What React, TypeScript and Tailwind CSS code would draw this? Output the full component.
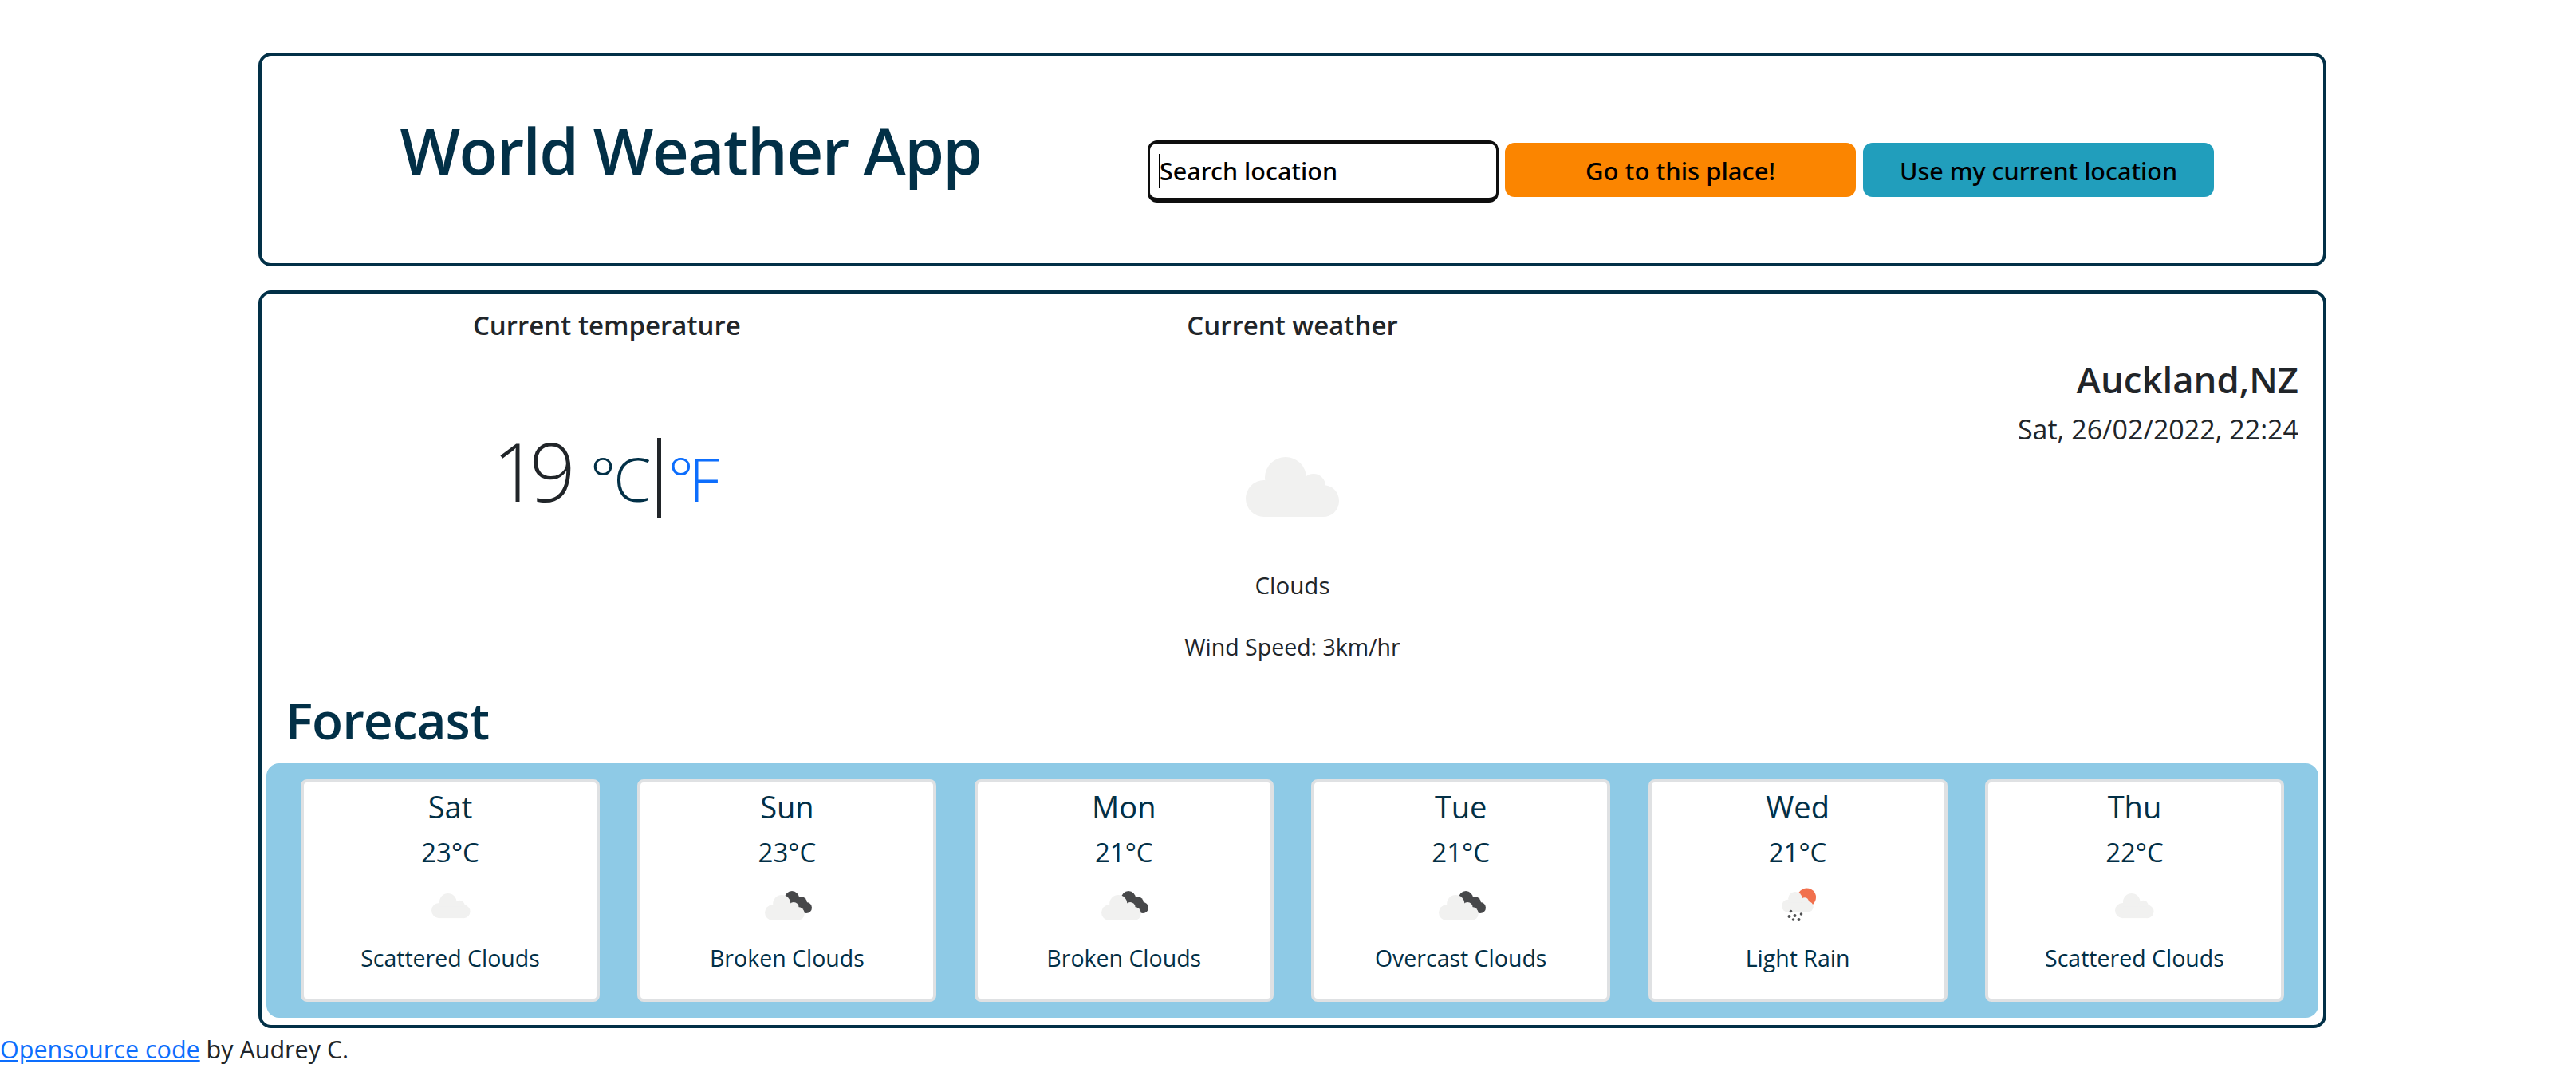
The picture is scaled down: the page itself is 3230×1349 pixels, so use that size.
const FONT = "font-['Open_Sans','Noto_Sans',sans-serif]";

type Kind = "scattered" | "broken" | "rain";

const FORECAST: { day: string; temp: string; kind: Kind; label: string }[] = [
  { day: "Sat", temp: "23°C", kind: "scattered", label: "Scattered Clouds" },
  { day: "Sun", temp: "23°C", kind: "broken", label: "Broken Clouds" },
  { day: "Mon", temp: "21°C", kind: "broken", label: "Broken Clouds" },
  { day: "Tue", temp: "21°C", kind: "broken", label: "Overcast Clouds" },
  { day: "Wed", temp: "21°C", kind: "rain", label: "Light Rain" },
  { day: "Thu", temp: "22°C", kind: "scattered", label: "Scattered Clouds" },
];

// base shape is 118x75, scaled down for the forecast cards
function CloudShape({ transform }: { transform?: string }) {
  return (
    <g fill="#f1f1f0" transform={transform}>
      <circle cx="23" cy="52" r="23" />
      <circle cx="50" cy="26" r="26" />
      <circle cx="85" cy="36" r="15" />
      <circle cx="97" cy="55" r="20" />
      <rect x="23" y="40" width="74" height="35" />
    </g>
  );
}

function SmallIcon({ kind }: { kind: Kind }) {
  return (
    <svg width="80" height="48" viewBox="0 0 80 48" className="mt-5">
      {kind === "scattered" && <CloudShape transform="translate(16 7) scale(0.415)" />}
      {kind === "broken" && (
        <>
          <g fill="#47484a">
            <circle cx="46" cy="13" r="9" />
            <circle cx="57" cy="19" r="8" />
            <circle cx="64" cy="25" r="7" />
            <circle cx="52" cy="24" r="8" />
          </g>
          <CloudShape transform="translate(12 9) scale(0.425)" />
        </>
      )}
      {kind === "rain" && (
        <>
          <circle cx="51.5" cy="12" r="11.5" fill="#f1704d" />
          <CloudShape transform="translate(20 5) scale(0.34)" />
          <g fill="#4f5052">
            <circle cx="31.5" cy="29.5" r="1.8" />
            <circle cx="29.5" cy="36" r="2" />
            <circle cx="36.5" cy="35" r="2" />
            <circle cx="44.5" cy="33" r="1.8" />
            <circle cx="34.5" cy="40" r="1.8" />
            <circle cx="41.5" cy="40" r="2" />
          </g>
        </>
      )}
    </svg>
  );
}

export default function App() {
  return (
    <div className={`${FONT} min-h-[1349px] bg-white text-[32px] leading-[48px] text-[#212529]`}>
      <div className="ml-[324px] w-[2593px] pt-[66px]">
        <header className="flex h-[268px] rounded-2xl border-4 border-[#023047]">
          <div className="flex w-[1076px] justify-center pt-[70px]">
            <h1 className="text-[80px] leading-[96px] font-semibold tracking-[-1.6px] text-[#023047]">
              World Weather App
            </h1>
          </div>
          <div className="mt-[106px] ml-[35px] flex h-[78px] items-center gap-2">
            <div className="relative">
              <input
                placeholder="Search location"
                className="h-[78px] w-[440px] rounded-xl border-x-[3px] border-t-4 border-b-[6px] border-[#0e0e0e] pl-3 font-['Noto_Sans',sans-serif] text-[30.5px] font-medium text-black outline-none placeholder:text-black"
              />
              <span className="absolute top-[17px] left-[14px] h-[43px] w-[1px] bg-black" />
            </div>
            <button className="mt-[-4px] h-[68px] w-[440px] rounded-xl bg-[#fb8500] pt-[2px] font-['Noto_Sans',sans-serif] text-[31px] font-medium text-black">
              Go to this place!
            </button>
            <button className="mt-[-4px] ml-[1px] h-[68px] w-[440px] rounded-xl bg-[#219ebc] pt-[2px] font-['Noto_Sans',sans-serif] text-[30.5px] font-medium text-black">
              Use my current location
            </button>
          </div>
        </header>

        <main className="mt-[30px] h-[925px] rounded-2xl border-4 border-[#023047]">
          <div className="grid h-[463px] grid-cols-3">
            <section className="flex flex-col items-center pt-4">
              <h2 className="ml-[4px] text-[33px] font-semibold">Current temperature</h2>
              <div className="mt-[88px] flex items-baseline font-light">
                <span className="mr-[-10px] ml-[-4px] text-[102px] leading-[140px] tracking-[-12px]">19</span>
                <span className="ml-[40px] text-[76px] leading-[140px] tracking-[-3px] text-[#023047]">°C</span>
                <span className="mt-[29px] ml-[10px] h-[100px] w-[5px] self-start bg-[#212529]" />
                <a className="ml-[9px] text-[76px] leading-[140px] tracking-[-6px] text-[#0d6efd]">°F</a>
              </div>
            </section>
            <section className="flex flex-col items-center pt-4">
              <h2 className="text-[33px] font-semibold">Current weather</h2>
              <svg width="118" height="75" viewBox="0 0 118 75" className="mt-[141px] ml-[2px]">
                <CloudShape />
              </svg>
              <p className="mt-[62px] text-[29.5px]">Clouds</p>
              <p className="mt-[29px] text-[28.5px]">Wind Speed: 3km/hr</p>
            </section>
            <section className="pt-[77px] pr-[31px] text-right">
              <h2 className="text-[45.5px] leading-[60px] font-semibold">Auckland,NZ</h2>
              <p className="mt-[9px] text-[34px]">Sat, 26/02/2022, 22:24</p>
            </section>
          </div>

          <h2 className="mt-[34px] pl-[30px] text-[64px] leading-[76px] font-semibold tracking-[-1px] text-[#023047]">
            Forecast
          </h2>
          <div className="mx-[6px] mt-[16px] flex h-[319px] items-center justify-between rounded-2xl bg-[#8ecae6] px-[43px]">
            {FORECAST.map((f) => (
              <div
                key={f.day}
                className="flex h-[279px] w-[375px] flex-col items-center rounded-lg border-4 border-[#dfe1e3] bg-white text-[#023047]"
              >
                <div className="text-[38px] leading-[60px]">{f.day}</div>
                <div className="mt-1 text-[33px] leading-[48px]">{f.temp}</div>
                <SmallIcon kind={f.kind} />
                <div className="mt-[19px] text-[28.5px] leading-[42px]">{f.label}</div>
              </div>
            ))}
          </div>
        </main>
      </div>
      <footer className="mt-[2px] text-[30.5px]">
        <a className="text-[#0d6efd] underline">Opensource code</a> by Audrey C.
      </footer>
    </div>
  );
}
